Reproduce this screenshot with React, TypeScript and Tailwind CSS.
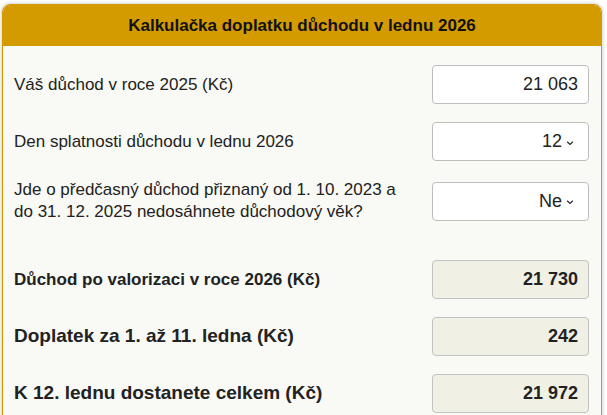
import React from "react";

const Chevron = () => (
  <svg width="8" height="6" viewBox="0 0 8 6" className="ml-[4px] mt-[2px]">
    <path d="M1.2 1.8 L4 4.4 L6.8 1.8" fill="none" stroke="#222" strokeWidth="1.2" />
  </svg>
);

export default function App() {
  return (
    <div className="w-[607px] h-[415px] bg-white overflow-hidden pt-[4px] pl-[2px]" style={{ fontFamily: '"Liberation Sans", Arial, sans-serif' }}>
      <div className="w-[600px] rounded-t-[8px] border border-[#d49a00] bg-[#f9f9f5] shadow-[0_0_4px_rgba(0,0,0,0.25)] overflow-hidden">
        <div className="h-[41px] bg-[#d49b00] flex items-center justify-center text-[17px] font-bold text-[#111]">
          Kalkulačka doplatku důchodu v lednu 2026
        </div>
        <div className="pl-[11px] pr-[12px] pt-[19px] pb-[20px] flex flex-col gap-[18px] text-[#222]">
          <div className="flex items-center justify-between">
            <div className="text-[17px]">Váš důchod v roce 2025 (Kč)</div>
            <div className="w-[157px] h-[39px] bg-white border border-[#bdbdbd] rounded-[4px] flex items-center justify-end pr-[10px] text-[18px]">21&nbsp;063</div>
          </div>
          <div className="flex items-center justify-between">
            <div className="text-[17px]">Den splatnosti důchodu v lednu 2026</div>
            <div className="w-[157px] h-[39px] bg-white border border-[#bdbdbd] rounded-[4px] flex items-center justify-end pr-[14px] text-[18px]">12<Chevron /></div>
          </div>
          <div className="flex items-center justify-between">
            <div className="text-[17px] leading-[22px]">Jde o předčasný důchod přiznaný od 1. 10. 2023 a<br />do 31. 12. 2025 nedosáhnete důchodový věk?</div>
            <div className="w-[157px] h-[39px] bg-white border border-[#bdbdbd] rounded-[4px] flex items-center justify-end pr-[14px] text-[18px]">Ne<Chevron /></div>
          </div>
          <div className="flex items-center justify-between mt-[19px]">
            <div className="text-[17px] font-bold">Důchod po valorizaci v roce 2026 (Kč)</div>
            <div className="w-[157px] h-[39px] bg-[#f0f0e5] border border-[#c2c2c2] rounded-[4px] flex items-center justify-end pr-[10px] text-[18px] font-bold">21&nbsp;730</div>
          </div>
          <div className="flex items-center justify-between">
            <div className="text-[19px] font-bold">Doplatek za 1. až 11. ledna (Kč)</div>
            <div className="w-[157px] h-[39px] bg-[#f0f0e5] border border-[#c2c2c2] rounded-[4px] flex items-center justify-end pr-[10px] text-[18px] font-bold">242</div>
          </div>
          <div className="flex items-center justify-between">
            <div className="text-[19px] font-bold">K 12. lednu dostanete celkem (Kč)</div>
            <div className="w-[157px] h-[39px] bg-[#f0f0e5] border border-[#c2c2c2] rounded-[4px] flex items-center justify-end pr-[10px] text-[18px] font-bold">21&nbsp;972</div>
          </div>
        </div>
      </div>
    </div>
  );
}
